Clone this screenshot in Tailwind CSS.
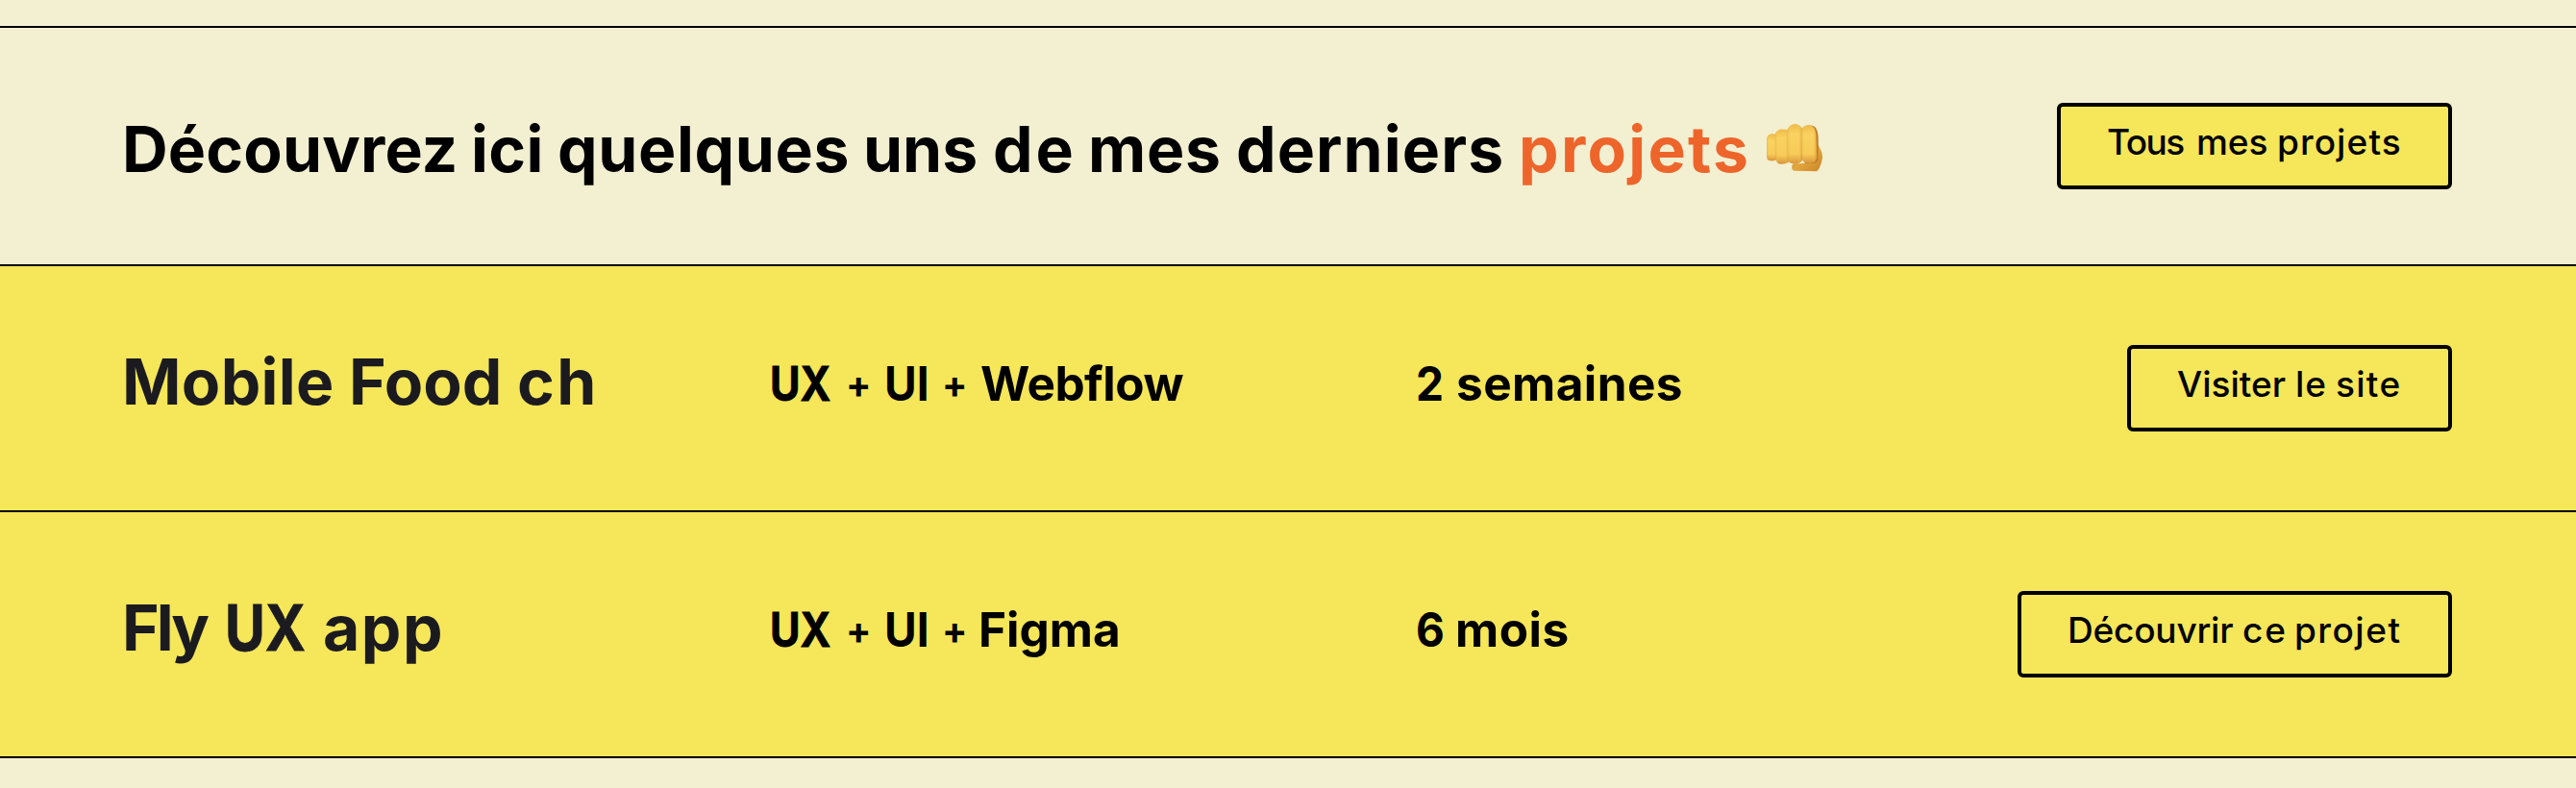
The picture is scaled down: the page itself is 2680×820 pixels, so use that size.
<!DOCTYPE html>
<html lang="fr">
<head>
<meta charset="utf-8">
<title>Projets</title>
<script src="https://cdn.jsdelivr.net/npm/@tailwindcss/browser@4"></script>
</head>
<body class="bg-[#f3efd1] font-['Inter',sans-serif] text-black">
<main class="mt-[27px] flex h-[762px] flex-col overflow-hidden border-y-2 border-black whitespace-nowrap">
  <section class="flex h-[246px] items-center justify-between pr-[129px] pl-[127px]">
    <h2 class="flex pt-1.5 text-[66px] leading-[80px] font-bold">
      <span class="w-[363px] tracking-[0.17px]">Découvrez</span>
      <span class="w-[90px] tracking-[0.4px]">ici</span>
      <span class="w-[318px] tracking-[0.67px]">quelques</span>
      <span class="w-[135px]">uns</span>
      <span class="w-[99px] tracking-[3px]">de</span>
      <span class="w-[154px] tracking-[0.75px]">mes</span>
      <span class="w-[294px] tracking-[1.1px]">derniers</span>
      <span class="w-[256px] tracking-[2.3px] text-[#ee652b]">projets</span>
      <svg class="mt-[12px] h-[53px] w-[62px]" viewBox="50 50 186 159" role="img" aria-label="Poing">
        <defs>
          <linearGradient id="finger" x1="0" y1="0" x2="0" y2="1">
            <stop offset="0" stop-color="#eebb48"/><stop offset=".25" stop-color="#fad260"/><stop offset=".75" stop-color="#f7cb58"/><stop offset="1" stop-color="#d7953a"/>
          </linearGradient>
          <linearGradient id="edge" x1="0" y1="0" x2="1" y2="0">
            <stop offset="0" stop-color="#c98524" stop-opacity=".3"/><stop offset=".25" stop-color="#ffd866" stop-opacity="0"/><stop offset=".7" stop-color="#ffd866" stop-opacity="0"/><stop offset="1" stop-color="#c07a22" stop-opacity=".6"/>
          </linearGradient>
          <linearGradient id="thumb" x1="0" y1="0" x2="1" y2="1">
            <stop offset="0" stop-color="#b87425"/><stop offset=".5" stop-color="#e2a63b"/><stop offset="1" stop-color="#c98529"/>
          </linearGradient>
        </defs>
        <path d="M214 118C223 130 231 148 230 160C228 176 222 196 212 204L142 202C133 200 133 188 138 181L200 176Z" fill="url(#thumb)"/>
        <path d="M205 64C214 72 217 86 217 104V160C217 172 211 178 200 179L176 180L160 100L175 64Q190 57 205 64Z" fill="#bf7b25"/>
        <g>
          <path d="M56 104C56 94 62 88 72 87Q84 86 88 94V166Q80 174 63 170Q56 167 56 157Z" fill="url(#finger)"/>
          <path d="M56 104C56 94 62 88 72 87Q84 86 88 94V166Q80 174 63 170Q56 167 56 157Z" fill="url(#edge)"/>
          <path d="M82 90C86 75 98 72 106 73Q118 70 126 80V172Q119 182 98 181Q86 179 86 166L82 110Z" fill="url(#finger)"/>
          <path d="M82 90C86 75 98 72 106 73Q118 70 126 80V172Q119 182 98 181Q86 179 86 166L82 110Z" fill="url(#edge)"/>
          <path d="M120 74C126 60 138 54 147 56Q163 60 168 74V167Q163 180 145 181Q124 181 123 168Z" fill="url(#finger)"/>
          <path d="M120 74C126 60 138 54 147 56Q163 60 168 74V167Q163 180 145 181Q124 181 123 168Z" fill="url(#edge)"/>
          <path d="M164 76C167 64 176 60 186 60C202 61 208 72 210 90L213 160Q211 177 190 179Q170 179 167 166Z" fill="url(#finger)"/>
          <path d="M164 76C167 64 176 60 186 60C202 61 208 72 210 90L213 160Q211 177 190 179Q170 179 167 166Z" fill="url(#edge)"/>
        </g>
      </svg>
    </h2>
    <a class="flex h-[90px] w-[411px] items-center rounded-md border-4 border-black bg-[#f5e65a] pb-[8px] pl-[48px] text-[37px] leading-[44px] font-medium">
      <span class="w-[93px] tracking-[-1.5px]">Tous</span>
      <span class="w-[84px]">mes</span>
      <span class="tracking-[1.1px]">projets</span>
    </a>
  </section>

  <section class="grid h-[256px] grid-cols-[673px_673px_1fr_auto] items-center border-t-2 border-black bg-[#f5e65a] pr-[129px] pl-[127px]">
    <h3 class="flex pb-3.5 text-[66px] leading-[80px] font-bold text-[#1b1b1f]">
      <span class="w-[236px] tracking-[0.35px]">Mobile</span>
      <span class="w-[175px]">Food</span>
      <span class="tracking-[2.5px]">ch</span>
    </h3>
    <p class="flex pb-2.5 pl-px text-[49.5px] leading-[60px] font-bold">
      <span class="w-[79px] origin-left scale-x-[.87] [-webkit-text-stroke:0.8px]">UX</span>
      <span class="w-[40px] pt-px text-[39px]">+</span>
      <span class="w-[60px] origin-left scale-x-[.93]">UI</span>
      <span class="w-[40px] pt-px text-[39px]">+</span>
      <span class="tracking-[-0.5px]">Webflow</span>
    </p>
    <p class="flex pb-[11px] text-[49.5px] leading-[60px] font-bold">
      <span class="w-[42px] origin-left scale-x-[.93]">2</span>
      <span class="tracking-[0.43px]">semaines</span>
    </p>
    <a class="flex h-[90px] w-[338px] items-center rounded-md border-4 border-black pb-[8px] pl-[48px] text-[37px] leading-[44px] font-medium">
      <span class="w-[123px]">Visiter</span>
      <span class="w-[42px] tracking-[1px]">le</span>
      <span class="tracking-[1.3px]">site</span>
    </a>
  </section>

  <section class="grid h-[256px] grid-cols-[673px_673px_1fr_auto] items-center border-t-2 border-black bg-[#f5e65a] pr-[129px] pl-[127px]">
    <h3 class="flex pb-3.5 text-[66px] leading-[80px] font-bold text-[#1b1b1f]">
      <span class="w-[107px] tracking-[-3px]">Fly</span>
      <span class="w-[102px] origin-left scale-x-[.865] [-webkit-text-stroke:0.8px]">UX</span>
      <span class="tracking-[1.5px]">app</span>
    </h3>
    <p class="flex pb-2.5 pl-px text-[49.5px] leading-[60px] font-bold">
      <span class="w-[79px] origin-left scale-x-[.87] [-webkit-text-stroke:0.8px]">UX</span>
      <span class="w-[40px] pt-px text-[39px]">+</span>
      <span class="w-[60px] origin-left scale-x-[.93]">UI</span>
      <span class="w-[38px] pt-px text-[39px]">+</span>
      <span>Figma</span>
    </p>
    <p class="flex pb-[11px] text-[49.5px] leading-[60px] font-bold">
      <span class="w-[41px] origin-left scale-x-[.93]">6</span>
      <span class="tracking-[0.5px]">mois</span>
    </p>
    <a class="flex h-[90px] w-[452px] items-center rounded-md border-4 border-black pb-[8px] pl-[48px] text-[37px] leading-[44px] font-medium">
      <span class="w-[182px] tracking-[-0.2px]">Découvrir</span>
      <span class="w-[54px] tracking-[1.8px]">ce</span>
      <span class="tracking-[1.5px]">projet</span>
    </a>
  </section>
</main>
</body>
</html>
